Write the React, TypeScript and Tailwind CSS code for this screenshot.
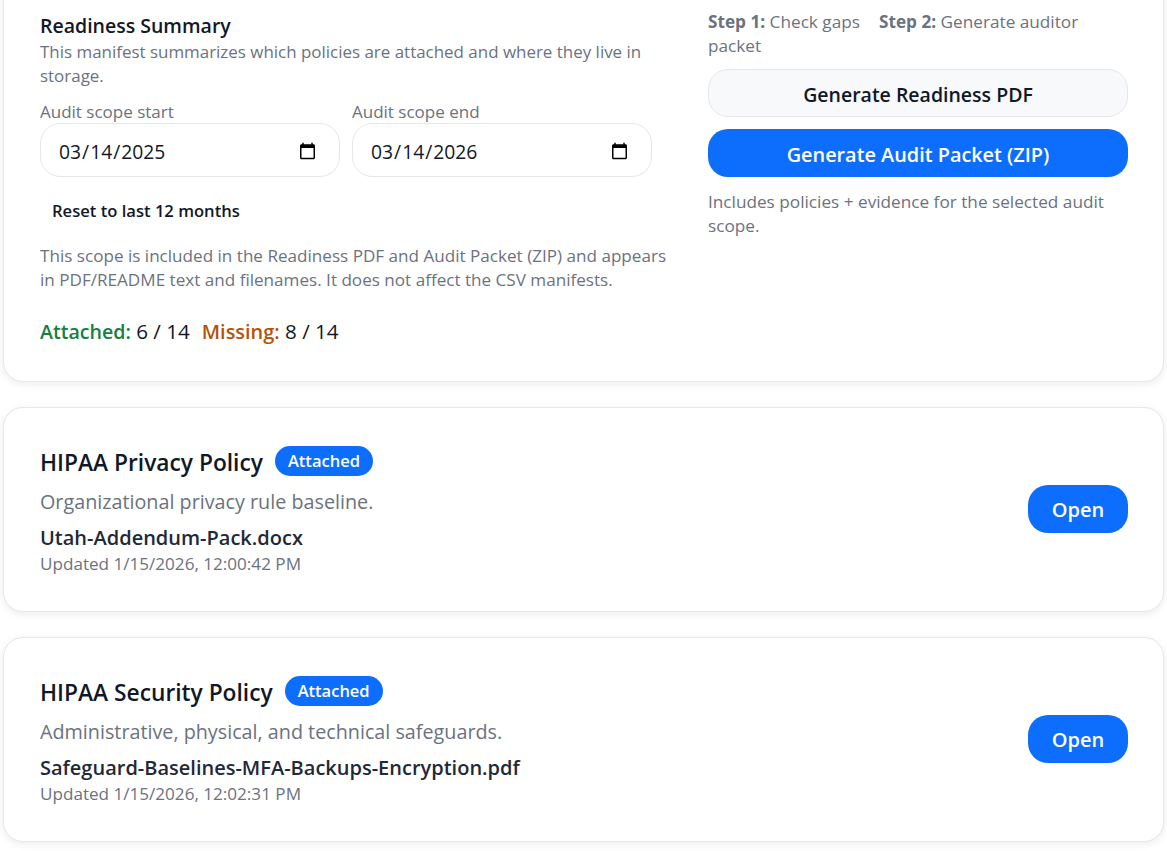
const policies = [
  {
    title: "HIPAA Privacy Policy",
    description: "Organizational privacy rule baseline.",
    file: "Utah-Addendum-Pack.docx",
    updated: "Updated 1/15/2026, 12:00:42 PM",
  },
  {
    title: "HIPAA Security Policy",
    description: "Administrative, physical, and technical safeguards.",
    file: "Safeguard-Baselines-MFA-Backups-Encryption.pdf",
    updated: "Updated 1/15/2026, 12:02:31 PM",
  },
];

const cardClass =
  "bg-white border border-[#e5e7eb] rounded-[20px] shadow-[0_2px_8px_rgba(0,0,0,0.08)]";

const DateField = ({ label, value }: { label: string; value: string }) => (
  <label className="flex w-[300px] flex-col">
    <span className="h-[24px] text-[17px] leading-[24px] text-[#6b7280]">{label}</span>
    <input
      type="date"
      defaultValue={value}
      className="mt-[-1px] h-[54px] rounded-[20px] border border-[#e5e7eb] bg-white pl-[17px] pr-[20px] pt-[4px] text-[19.3px] text-[#111827] outline-none"
    />
  </label>
);

export default function App() {
  return (
    <div className="h-[851px] overflow-hidden bg-white pl-[3px] pr-[3px] font-['Open_Sans',sans-serif] text-[#111827]">
      {/* Readiness summary */}
      <section className={`${cardClass} -mt-[24px] flex justify-between pb-[35px] pl-[36px] pr-[35px] pt-[35px]`}>
        <div className="w-[632px]">
          <h2 className="text-[19.5px] font-semibold leading-[28px] text-[#111827]">Readiness Summary</h2>
          <p className="text-[16.95px] leading-[24px] text-[#6b7280]">
            This manifest summarizes which policies are attached and where they live in storage.
          </p>
          <div className="mt-[12px] flex gap-[12px]">
            <DateField label="Audit scope start" value="2025-03-14" />
            <DateField label="Audit scope end" value="2026-03-14" />
          </div>
          <button className="mt-[16px] block h-[36px] px-[12px] text-[16.6px] font-semibold text-[#111827]">
            Reset to last 12 months
          </button>
          <p className="mt-[15px] text-[17.1px] leading-[24px] text-[#6b7280]">
            This scope is included in the Readiness PDF and Audit Packet (ZIP) and appears in PDF/README text and
            filenames. It does not affect the CSV manifests.
          </p>
          <div className="mt-[25px] text-[20.6px] leading-[28px]">
            <span className="text-[19.6px] font-semibold text-[#15803d]">Attached:</span> 6 / 14
            <span className="ml-[12px] text-[19.9px] font-semibold text-[#b45309]">Missing:</span> 8 / 14
          </div>
        </div>
        <div className="-mt-[2px] w-[420px]">
          <p className="text-[17.2px] leading-[24px] text-[#6b7280]">
            <strong className="font-bold">Step 1:</strong> Check gaps
            <strong className="ml-[19px] font-bold">Step 2:</strong> Generate auditor packet
          </p>
          <button className="mt-[11px] block h-[48px] w-full rounded-[20px] border border-[#e5e7eb] bg-[#f8f9fa] pt-[3px] text-[19.5px] font-semibold text-[#111827]">
            Generate Readiness PDF
          </button>
          <button className="mt-[12px] block h-[48px] w-full rounded-[20px] bg-[#0d6efd] pt-[3px] text-[19.85px] font-semibold text-white">
            Generate Audit Packet (ZIP)
          </button>
          <p className="mt-[13px] text-[17.2px] leading-[24px] text-[#6b7280]">
            Includes policies + evidence for the selected audit scope.
          </p>
        </div>
      </section>

      {policies.map((p) => (
        <section key={p.title} className={`${cardClass} mt-[25px] flex h-[205px] items-center justify-between pl-[36px] pr-[35px] pt-[2px]`}>
          <div>
            <div className="flex h-[32px] items-start gap-[12px]">
              <h3 className="mt-[1px] text-[22.75px] font-semibold leading-[32px] text-[#111827]">{p.title}</h3>
              <span className="flex h-[30px] items-center rounded-full bg-[#0d6efd] px-[13px] pt-[2px] text-[16.5px] font-semibold text-white">
                Attached
              </span>
            </div>
            <p className="mt-[10px] text-[19.75px] leading-[28px] text-[#6b7280]">{p.description}</p>
            <p className="mt-[8px] text-[20px] font-semibold leading-[28px] text-[#1f2937]">{p.file}</p>
            <p className="text-[17.1px] leading-[24px] text-[#6b7280]">{p.updated}</p>
          </div>
          <button className="mb-[4px] h-[48px] w-[100px] rounded-[20px] bg-[#0d6efd] pt-[3px] text-[20px] font-semibold text-white">
            Open
          </button>
        </section>
      ))}
    </div>
  );
}
